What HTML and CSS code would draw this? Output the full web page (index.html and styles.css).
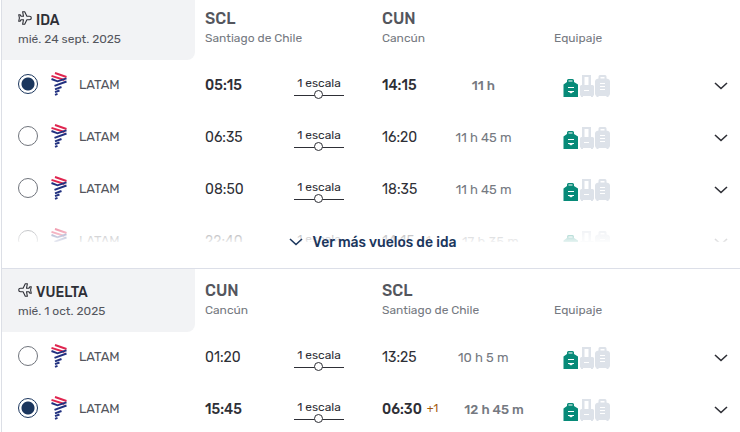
FILE: index.html
```html
<!DOCTYPE html>
<html lang="es">

<head>
    <meta charset="UTF-8">
    <title>Vuelos</title>
    <link rel="stylesheet" href="styles.css">
</head>

<body>
    <svg class="sprite" aria-hidden="true">
        <symbol id="plane" viewBox="0 0 14 14">
            <path d="M.7 3.700h1.300l1.200 1.600h2.300L4.600.700h2.100l2.200 4.600h2.600c1 0 1.800.7 1.800 1.700s-.8 1.700-1.800 1.700H8.900l-2.200 4.600H4.600l.9-4.600H3.200L2 10.300H.7L1.400 7z" fill="none" stroke="currentColor" stroke-width="1.100" stroke-linejoin="round" />
        </symbol>
        <symbol id="latam" viewBox="0 0 16 24">
            <g fill="none" stroke-width="1.900">
                <path d="M4 1l11.500 4M0.500 3.800l13 4.200" stroke="#e0254f" />
                <path d="M0.500 7l6 2.300 9-3M15.500 9.500L3.500 13.800M10.500 15L4 17.400M8.500 18.500L4 20.200M6.500 21.800L4 22.800" stroke="#21307f" />
            </g>
        </symbol>
        <symbol id="chevron" viewBox="0 0 14 8">
            <path d="M1 1l6 5.500L13 1" fill="none" stroke="currentColor" stroke-width="1.600" />
        </symbol>
        <symbol id="bags" viewBox="0 0 48 22">
            <path d="M4 7V5.500Q4 4 5.500 4h4Q11 4 11 5.500V7l4 2.500V22H0.500V9.500zM5.500 5.500V6.500h4v-1z" fill="#078a78" fill-rule="evenodd" />
            <path d="M5 12.500h6M5 16.500h6" stroke="#fff" stroke-width="1.200" />
            <path d="M6 17h4l-2 1.500z" fill="#fff" />
            <g fill="#dde2e9">
                <path d="M19 10V0h9v10h1.500q1.500 0 1.500 1.500v8q0 1-1 1.500v1h-2v-1h-8v1h-2v-1q-1-.5-1-1.500v-8q0-1.500 1.500-1.500zM21.500 2v8h4V2z" fill-rule="evenodd" />
                <path d="M35.500 3.500V1.500Q35.500 0 37 0h5q1.500 0 1.500 1.500v2q3.500.5 3.500 3v12q0 2-1.500 2.500v1h-2v-1h-8v1h-2v-1q-1.500-.5-1.500-2.500v-12q0-2.500 3.500-3zM37.500 2v1.500h4V2z" fill-rule="evenodd" />
            </g>
            <path d="M21 15.500h5M37 8.500h5M37 11.500h5M37 14.500h5" stroke="#fff" stroke-width="1.200" />
        </symbol>
    </svg>

    <main class="flights">
        <section class="leg leg-more">
            <header class="leg-header">
                <div class="leg-title">
                    <h2><svg class="plane"><use href="#plane" /></svg>IDA</h2>
                    <p>mié. 24 sept. 2025</p>
                </div>
                <div class="airport airport-from"><strong>SCL</strong><span>Santiago de Chile</span></div>
                <div class="airport"><strong>CUN</strong><span>Cancún</span></div>
                <div class="airport baggage-title"><span>Equipaje</span></div>
            </header>
            <div class="list">
                <div class="row selected">
                    <label class="airline"><input type="radio" name="ida" checked><svg class="logo"><use href="#latam" /></svg>LATAM</label>
                    <time>05:15</time>
                    <div class="stops">1 escala</div>
                    <div class="arrival"><time>14:15</time><span class="duration">11 h</span></div>
                    <div class="extras"><svg class="bags"><use href="#bags" /></svg><button class="toggle" aria-label="Ver detalle"><svg class="chevron"><use href="#chevron" /></svg></button></div>
                </div>
                <div class="row">
                    <label class="airline"><input type="radio" name="ida"><svg class="logo"><use href="#latam" /></svg>LATAM</label>
                    <time>06:35</time>
                    <div class="stops">1 escala</div>
                    <div class="arrival"><time>16:20</time><span class="duration">11 h 45 m</span></div>
                    <div class="extras"><svg class="bags"><use href="#bags" /></svg><button class="toggle" aria-label="Ver detalle"><svg class="chevron"><use href="#chevron" /></svg></button></div>
                </div>
                <div class="row">
                    <label class="airline"><input type="radio" name="ida"><svg class="logo"><use href="#latam" /></svg>LATAM</label>
                    <time>08:50</time>
                    <div class="stops">1 escala</div>
                    <div class="arrival"><time>18:35</time><span class="duration">11 h 45 m</span></div>
                    <div class="extras"><svg class="bags"><use href="#bags" /></svg><button class="toggle" aria-label="Ver detalle"><svg class="chevron"><use href="#chevron" /></svg></button></div>
                </div>
                <div class="row">
                    <label class="airline"><input type="radio" name="ida"><svg class="logo"><use href="#latam" /></svg>LATAM</label>
                    <time>22:40</time>
                    <div class="stops">1 escala</div>
                    <div class="arrival"><time>14:15</time><sup>+1</sup><span class="duration">17 h 35 m</span></div>
                    <div class="extras"><svg class="bags"><use href="#bags" /></svg><button class="toggle" aria-label="Ver detalle"><svg class="chevron"><use href="#chevron" /></svg></button></div>
                </div>
            </div>
            <div class="more">
                <button class="more-button"><svg class="chevron"><use href="#chevron" /></svg>Ver más vuelos de ida</button>
            </div>
        </section>

        <section class="leg">
            <header class="leg-header">
                <div class="leg-title">
                    <h2><svg class="plane plane-back"><use href="#plane" /></svg>VUELTA</h2>
                    <p>mié. 1 oct. 2025</p>
                </div>
                <div class="airport airport-from"><strong>CUN</strong><span>Cancún</span></div>
                <div class="airport"><strong>SCL</strong><span>Santiago de Chile</span></div>
                <div class="airport baggage-title"><span>Equipaje</span></div>
            </header>
            <div class="list">
                <div class="row">
                    <label class="airline"><input type="radio" name="vuelta"><svg class="logo"><use href="#latam" /></svg>LATAM</label>
                    <time>01:20</time>
                    <div class="stops">1 escala</div>
                    <div class="arrival"><time>13:25</time><span class="duration">10 h 5 m</span></div>
                    <div class="extras"><svg class="bags"><use href="#bags" /></svg><button class="toggle" aria-label="Ver detalle"><svg class="chevron"><use href="#chevron" /></svg></button></div>
                </div>
                <div class="row selected">
                    <label class="airline"><input type="radio" name="vuelta" checked><svg class="logo"><use href="#latam" /></svg>LATAM</label>
                    <time>15:45</time>
                    <div class="stops">1 escala</div>
                    <div class="arrival"><time>06:30</time><sup>+1</sup><span class="duration">12 h 45 m</span></div>
                    <div class="extras"><svg class="bags"><use href="#bags" /></svg><button class="toggle" aria-label="Ver detalle"><svg class="chevron"><use href="#chevron" /></svg></button></div>
                </div>
            </div>
        </section>
    </main>
</body>

</html>
```
FILE: styles.css
```css
* {
    box-sizing: border-box;
}

body {
    margin: 0;
    background-color: #fff;
    color: #2e2f36;
    font-family: Rubik, Roboto, sans-serif;
    font-size: 14px;
    overflow: hidden;
}

h2, p {
    margin: 0;
}

button {
    border: none;
    padding: 0;
    background: none;
    color: inherit;
    font: inherit;
    cursor: pointer;
}

.sprite {
    display: none;
}

.flights {
    margin: -3px 0 0 1px;
    border-left: 1px solid #dcdfe6;
}

.leg {
    position: relative;
}

.leg-more {
    padding-bottom: 26px;
    border-bottom: 1px solid #dcdfe8;
}

.leg-more .list {
    max-height: 182px;
    overflow: hidden;
}

.leg-header, .row {
    display: grid;
    grid-template-columns: 203fr 89fr 88fr 172fr 186fr;
}

.leg-header {
    height: 63px;
}

.leg-title {
    margin-right: 10px;
    padding: 14px 0 0 16px;
    background-color: #f2f3f5;
    border-bottom-right-radius: 8px;
}

.leg-title h2 {
    display: flex;
    gap: 4px;
    font-size: 14px;
    line-height: 19px;
    font-weight: 500;
}

.leg-title p {
    color: #54565d;
    font-size: 12px;
    line-height: 18px;
}

.plane {
    width: 14px;
    height: 14px;
}

.plane-back {
    transform: scaleX(-1);
}

.airport {
    display: flex;
    flex-direction: column;
    padding-top: 12px;
    color: #757981;
    font-size: 12px;
    line-height: 18px;
}

.airport-from {
    grid-column: span 2;
}

.airport strong {
    color: #54565d;
    font-size: 16px;
    line-height: 20px;
    font-weight: 500;
}

.baggage-title {
    padding-top: 32px;
}

.row {
    height: 52px;
    padding-bottom: 2px;
    align-items: center;
}

.airline {
    display: flex;
    align-items: center;
    padding: 0 0 2px 16px;
    color: #54565d;
    font-size: 13px;
}

.airline input {
    appearance: none;
    width: 20px;
    height: 20px;
    margin: 0 13px 0 0;
    border: 1px solid #70747c;
    border-radius: 50%;
    background-color: #fff;
}

.airline input:checked {
    border-color: #1b365d;
    background-image: radial-gradient(circle, #1b365d 6px, transparent 7px);
}

.logo {
    width: 16px;
    height: 24px;
    margin-right: 12px;
}

.selected time, .selected .duration {
    font-weight: 500;
}

.stops {
    position: relative;
    width: 50px;
    padding: 2px 0 5px;
    border-bottom: 1px solid #2e2f36;
    font-size: 12px;
    line-height: 14px;
    text-align: center;
    white-space: nowrap;
}

/* stop marker on the line */
.stops::after {
    content: "";
    position: absolute;
    left: 50%;
    bottom: -4px;
    width: 7px;
    height: 7px;
    margin-left: -5px;
    border: 1px solid #2e2f36;
    border-radius: 50%;
    background-color: #fff;
}

.arrival {
    display: flex;
    align-items: center;
    padding-right: 4px;
}

.arrival sup {
    margin-left: 5px;
    color: #a3590a;
    font-size: 11px;
    line-height: 14px;
}

.duration {
    flex: 1;
    color: #757981;
    font-size: 13px;
    text-align: center;
}

.extras {
    display: flex;
    justify-content: space-between;
    align-items: center;
    padding: 2px 12px 0 9px;
}

.bags {
    width: 48px;
    height: 22px;
}

.toggle {
    display: flex;
}

.chevron {
    width: 14px;
    height: 8px;
}

.more {
    position: absolute;
    left: 0;
    right: 0;
    bottom: 0;
    display: flex;
    justify-content: center;
    height: 52px;
    padding-left: 4px;
    background: linear-gradient(rgba(255, 255, 255, 0.2), rgba(255, 255, 255, 0.9) 26px, #fff 30px);
}

.more-button {
    display: flex;
    align-items: center;
    gap: 9px;
    color: #1b365d;
    font-size: 14px;
    font-weight: 500;
}
```
